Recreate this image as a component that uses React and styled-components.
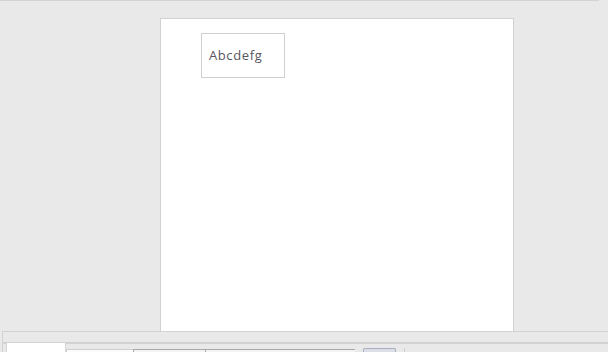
import React from 'react';
import styled, { createGlobalStyle } from 'styled-components';

const Global = createGlobalStyle`
	html, body {
		margin: 0;
		padding: 0;
		background: #e9e9e9;
		overflow: hidden;
	}
	#root {
		width: 608px;
		height: 352px;
	}
`;

const Shell = styled.div`
	display: flex;
	flex-direction: column;
	width: 608px;
	height: 352px;
	background: #e9e9e9;
	overflow: hidden;
`;

const TopRule = styled.div`
	width: 599px;
	height: 1px;
	background: #d3d3d3;
	flex: none;
`;

const Stage = styled.div`
	flex: none;
	display: flex;
	padding: 17px 0 0 160px;
	height: 313px;
`;

const Sheet = styled.div`
	width: 352px;
	height: 312px;
	background: #fff;
	border: 1px solid #d2d2d2;
	border-bottom: none;
	display: flex;
	align-items: flex-start;
`;

const TextBox = styled.div`
	box-sizing: border-box;
	margin: 14px 0 0 40px;
	width: 84px;
	height: 45px;
	padding: 0 0 2px 7px;
	border: 1px solid #cfcfcf;
	display: flex;
	align-items: center;
	font-family: "Open Sans", "Liberation Sans", sans-serif;
	font-size: 13px;
	letter-spacing: 0.6px;
	color: #57565f;
`;

const Panel = styled.div`
	flex: none;
	margin-left: 2px;
	border-top: 1px solid #d3d3d3;
	border-left: 1px solid #d3d3d3;
	background: #e9e9e9;
	display: flex;
	flex-direction: column;
	height: 21px;
`;

const PanelHead = styled.div`
	height: 10px;
	border-bottom: 2px solid #d2d2d2;
`;

const TabStrip = styled.div`
	display: flex;
	align-items: flex-start;
	height: 9px;
	padding-left: 3px;
`;

const Tab = styled.div`
	width: 58px;
	height: 10px;
	margin-top: -1px;
	background: #fff;
	border-left: 1px solid #d6d6d6;
	border-right: 1px solid #d6d6d6;
`;

const Field = styled.div`
	margin-top: 5px;
	height: 4px;
	width: ${p => p.$w}px;
	border-top: 1px solid ${p => p.$line};
	border-left: 1px solid ${p => p.$line};
	background: ${p => p.$bg || '#f4f4f4'};
`;

const Button = styled.div`
	margin: 4px 0 0 8px;
	width: 31px;
	height: 5px;
	border: 1px solid #a9adbf;
	border-bottom: none;
	border-radius: 2px 2px 0 0;
	background: #dcdfe8;
`;

const EndCap = styled.div`
	margin: 4px 0 0 8px;
	width: 1px;
	height: 5px;
	background: #cfcfcf;
`;

export default function App() {
	return (
		<>
			<Global />
			<Shell>
				<TopRule />
				<Stage>
					<Sheet>
						<TextBox>Abcdefg</TextBox>
					</Sheet>
				</Stage>
				<Panel>
					<PanelHead />
					<TabStrip>
						<Tab />
						<Field $w={66} $line="#cfcfcf" $bg="#fbfbfb" />
						<Field $w={71} $line="#a8a8a8" />
						<Field $w={149} $line="#a8a8a8" />
						<Button />
						<EndCap />
					</TabStrip>
				</Panel>
			</Shell>
		</>
	);
}
